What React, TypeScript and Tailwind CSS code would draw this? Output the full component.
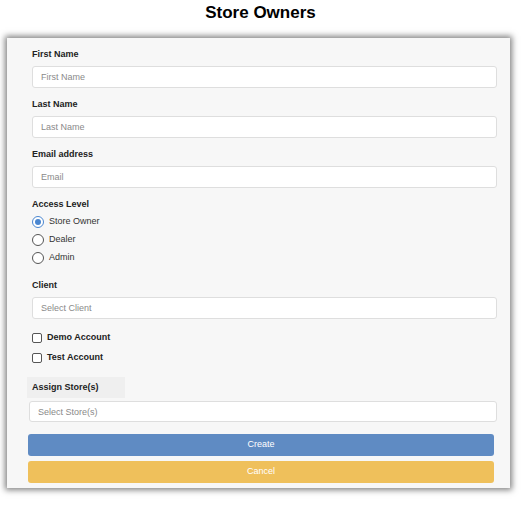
import React from 'react';

const font = { fontFamily: '"Liberation Sans", Arial, Helvetica, sans-serif' };

interface FieldProps {
  label: string;
  placeholder: string;
}

const Field: React.FC<FieldProps> = ({ label, placeholder }) => (
  <div className="mb-[11px]">
    <label className="block text-[9px] leading-[11px] font-bold text-[#222]">{label}</label>
    <input
      type="text"
      placeholder={placeholder}
      className="mt-[6px] block w-full h-[22px] px-[8px] text-[9px] bg-white border border-[#dedede] rounded-[3px] outline-none placeholder:text-[#8a8a8a]"
    />
  </div>
);

const Radio: React.FC<{ label: string; checked?: boolean }> = ({ label, checked }) => (
  <div className="flex items-center h-[18px]">
    {checked ? (
      <span className="w-[12px] h-[12px] rounded-full border-[1.5px] border-[#4a86d0] bg-white flex items-center justify-center">
        <span className="w-[6px] h-[6px] rounded-full bg-[#4a86d0]" />
      </span>
    ) : (
      <span className="w-[12px] h-[12px] rounded-full border-[1.5px] border-[#555] bg-white" />
    )}
    <span className="ml-[5px] text-[9px] text-[#333]">{label}</span>
  </div>
);

const Check: React.FC<{ label: string }> = ({ label }) => (
  <div className="flex items-center h-[20px]">
    <span className="w-[10px] h-[10px] border-[1.5px] border-[#555] rounded-[2px] bg-white" />
    <span className="ml-[5px] text-[9px] font-bold text-[#222]">{label}</span>
  </div>
);

export default function App() {
  return (
    <div className="w-[521px] h-[512px] bg-white" style={font}>
      <h1 className="pt-[3px] text-center text-[17px] leading-[20px] font-bold text-black">Store Owners</h1>

      <div className="mt-[15px] ml-[7px] w-[503px] h-[450px] bg-[#f7f7f7] pt-[11px] pl-[25px] pr-[13px] shadow-[0_0_6px_2px_rgba(0,0,0,0.5)]">
        <Field label="First Name" placeholder="First Name" />
        <Field label="Last Name" placeholder="Last Name" />
        <Field label="Email address" placeholder="Email" />

        {/* Access Level */}
        <div>
          <label className="block text-[9px] leading-[11px] font-bold text-[#222]">Access Level</label>
          <div className="mt-[3px]">
            <Radio label="Store Owner" checked />
            <Radio label="Dealer" />
            <Radio label="Admin" />
          </div>
        </div>

        {/* Client */}
        <div className="mt-[13px]">
          <label className="block text-[9px] leading-[11px] font-bold text-[#222]">Client</label>
          <input
            type="text"
            placeholder="Select Client"
            className="mt-[6px] block w-full h-[22px] px-[8px] text-[9px] bg-white border border-[#dedede] rounded-[3px] outline-none placeholder:text-[#8a8a8a]"
          />
        </div>

        <div className="mt-[9px]">
          <Check label="Demo Account" />
          <Check label="Test Account" />
        </div>

        {/* Assign Stores */}
        <div className="mt-[9px] -ml-[5px] w-[98px] h-[21px] bg-[#efefef] pl-[5px] flex items-center">
          <span className="text-[9px] font-bold text-[#222]">Assign Store(s)</span>
        </div>
        <input
          type="text"
          placeholder="Select Store(s)"
          className="mt-[3px] -ml-[3px] block w-[468px] h-[21px] px-[8px] text-[9px] bg-white border border-[#dedede] rounded-[3px] outline-none placeholder:text-[#8a8a8a]"
        />

        <div className="mt-[12px] -ml-[4px] w-[466px] flex flex-col gap-[5px]">
          <button className="h-[22px] w-full rounded-[3px] bg-[#5f8bc3] text-white text-[9px]">Create</button>
          <button className="h-[22px] w-full rounded-[3px] bg-[#efc05b] text-white text-[9px]">Cancel</button>
        </div>
      </div>
    </div>
  );
}
